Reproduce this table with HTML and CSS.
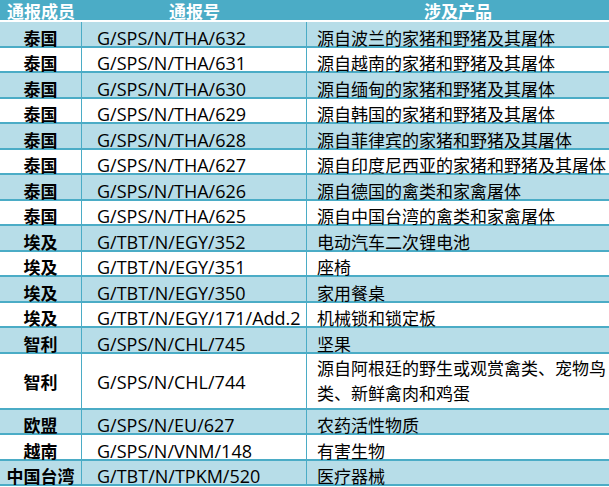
FILE: index.html
```html
<!DOCTYPE html>
<html lang="zh-CN">
<head>
<meta charset="utf-8">
<title>通报</title>
<link rel="stylesheet" href="styles.css">
</head>
<body>
<table class="notice-table">
  <colgroup>
    <col class="col-member">
    <col class="col-code">
    <col class="col-product">
  </colgroup>
  <thead>
    <tr><th>通报成员</th><th>通报号</th><th>涉及产品</th></tr>
  </thead>
  <tbody>
    <tr><td class="member">泰国</td><td class="code">G/SPS/N/THA/632</td><td class="product">源自波兰的家猪和野猪及其屠体</td></tr>
    <tr><td class="member">泰国</td><td class="code">G/SPS/N/THA/631</td><td class="product">源自越南的家猪和野猪及其屠体</td></tr>
    <tr><td class="member">泰国</td><td class="code">G/SPS/N/THA/630</td><td class="product">源自缅甸的家猪和野猪及其屠体</td></tr>
    <tr><td class="member">泰国</td><td class="code">G/SPS/N/THA/629</td><td class="product">源自韩国的家猪和野猪及其屠体</td></tr>
    <tr><td class="member">泰国</td><td class="code">G/SPS/N/THA/628</td><td class="product">源自菲律宾的家猪和野猪及其屠体</td></tr>
    <tr><td class="member">泰国</td><td class="code">G/SPS/N/THA/627</td><td class="product">源自印度尼西亚的家猪和野猪及其屠体</td></tr>
    <tr><td class="member">泰国</td><td class="code">G/SPS/N/THA/626</td><td class="product">源自德国的禽类和家禽屠体</td></tr>
    <tr><td class="member">泰国</td><td class="code">G/SPS/N/THA/625</td><td class="product">源自中国台湾的禽类和家禽屠体</td></tr>
    <tr><td class="member">埃及</td><td class="code">G/TBT/N/EGY/352</td><td class="product">电动汽车二次锂电池</td></tr>
    <tr><td class="member">埃及</td><td class="code">G/TBT/N/EGY/351</td><td class="product">座椅</td></tr>
    <tr><td class="member">埃及</td><td class="code">G/TBT/N/EGY/350</td><td class="product">家用餐桌</td></tr>
    <tr><td class="member">埃及</td><td class="code">G/TBT/N/EGY/171/Add.2</td><td class="product">机械锁和锁定板</td></tr>
    <tr><td class="member">智利</td><td class="code">G/SPS/N/CHL/745</td><td class="product">坚果</td></tr>
    <tr class="tall"><td class="member">智利</td><td class="code">G/SPS/N/CHL/744</td><td class="product">源自阿根廷的野生或观赏禽类、宠物鸟类、新鲜禽肉和鸡蛋</td></tr>
    <tr><td class="member">欧盟</td><td class="code">G/SPS/N/EU/627</td><td class="product">农药活性物质</td></tr>
    <tr><td class="member">越南</td><td class="code">G/SPS/N/VNM/148</td><td class="product">有害生物</td></tr>
    <tr><td class="member">中国台湾</td><td class="code">G/TBT/N/TPKM/520</td><td class="product">医疗器械</td></tr>
  </tbody>
</table>
</body>
</html>
```
FILE: styles.css
```css
html, body {
  margin: 0;
  padding: 0;
  background: #ffffff;
}

.notice-table {
  width: 609px;
  table-layout: fixed;
  border-collapse: separate;
  border-spacing: 0;
  font-family: "Noto Sans CJK SC", "Microsoft YaHei", sans-serif;
  color: #000000;
}

.col-member { width: 82px; }
.col-code { width: 225px; }
.col-product { width: 302px; }

.notice-table th {
  height: 18px;
  padding: 2px 0 0 0;
  background: #4bacc6;
  color: #ffffff;
  font-size: 17px;
  font-weight: 700;
  line-height: 18px;
  text-align: center;
  vertical-align: middle;
  border-bottom: 2px solid #ffffff;
}

.notice-table td {
  height: 23.5px;
  padding: 0;
  border-bottom: 2px solid #4bacc6;
  vertical-align: bottom;
  line-height: 16px;
  white-space: nowrap;
}

.notice-table tbody tr:nth-child(odd) td {
  background: #b7dde8;
}

.member {
  text-align: center;
  font-size: 17px;
  font-weight: 700;
  border-right: 1px solid #4bacc6;
}

.code {
  padding-left: 15px !important;
  font-family: "Open Sans", "Noto Sans", sans-serif;
  font-size: 18px;
  border-right: 1px solid #4bacc6;
}

.product {
  padding-left: 10px !important;
  font-size: 17px;
}

.tall td {
  vertical-align: middle;
  padding-top: 3px !important;
}

.tall .product {
  white-space: normal;
  line-height: 25px;
  padding-top: 1px !important;
  padding-bottom: 3px !important;
}
```
